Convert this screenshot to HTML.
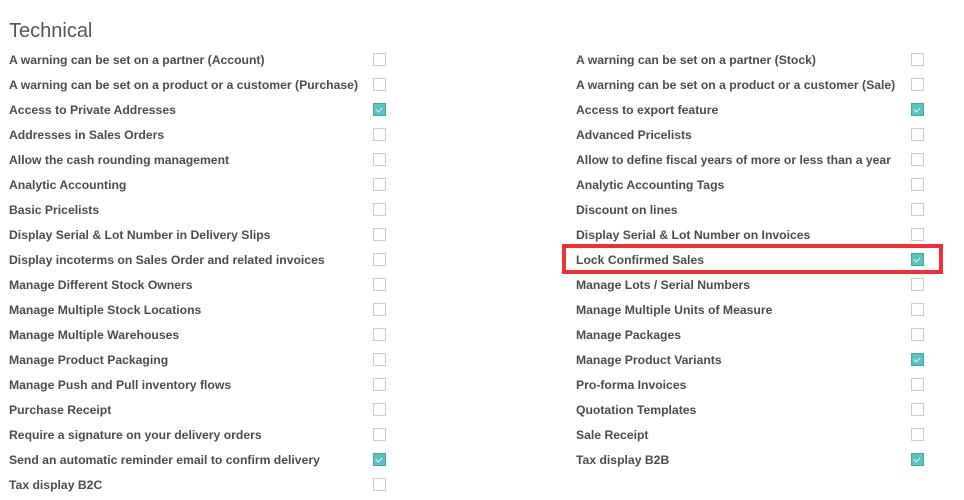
<!DOCTYPE html><html><head><style>
body{margin:0;background:#fff;width:964px;height:500px;overflow:hidden;font-family:"Liberation Sans",sans-serif;position:relative}
h1{position:absolute;left:9px;top:20px;margin:0;font-size:20px;font-weight:normal;color:#555}
.r{position:absolute;font-size:12.2px;font-weight:bold;color:#4c4c4c;line-height:16px;white-space:nowrap}
.c{position:absolute;width:11px;height:11px;border:1px solid #ccc;background:#fff}
.c.k{background:#5cc2bd;border-color:#3fa9a3}
.c.k:after{content:"";position:absolute;left:3px;top:2px;width:3px;height:5px;border:solid #e6f7f6;border-width:0 1px 1px 0;transform:rotate(45deg)}
.box{position:absolute;left:562px;top:244px;width:373px;height:22px;border:4px solid #ee3136}
</style></head><body>
<h1>Technical</h1>
<div class="box"></div>
<script>
const L=[["A warning can be set on a partner (Account)",0],["A warning can be set on a product or a customer (Purchase)",0],["Access to Private Addresses",1],["Addresses in Sales Orders",0],["Allow the cash rounding management",0],["Analytic Accounting",0],["Basic Pricelists",0],["Display Serial & Lot Number in Delivery Slips",0],["Display incoterms on Sales Order and related invoices",0],["Manage Different Stock Owners",0],["Manage Multiple Stock Locations",0],["Manage Multiple Warehouses",0],["Manage Product Packaging",0],["Manage Push and Pull inventory flows",0],["Purchase Receipt",0],["Require a signature on your delivery orders",0],["Send an automatic reminder email to confirm delivery",1],["Tax display B2C",0]];
const R=[["A warning can be set on a partner (Stock)",0],["A warning can be set on a product or a customer (Sale)",0],["Access to export feature",1],["Advanced Pricelists",0],["Allow to define fiscal years of more or less than a year",0],["Analytic Accounting Tags",0],["Discount on lines",0],["Display Serial & Lot Number on Invoices",0],["Lock Confirmed Sales",1],["Manage Lots / Serial Numbers",0],["Manage Multiple Units of Measure",0],["Manage Packages",0],["Manage Product Variants",1],["Pro-forma Invoices",0],["Quotation Templates",0],["Sale Receipt",0],["Tax display B2B",1]];
let h="";
function col(a,lx,cx){a.forEach((e,i)=>{const y=59+25*i;h+=`<div class="r" style="left:${lx}px;top:${y-7}px">${e[0].replace(/&/g,"&amp;")}</div><div class="c${e[1]?" k":""}" style="left:${cx}px;top:${y-6}px"></div>`})}
col(L,9,373);col(R,576,911);
document.body.insertAdjacentHTML("beforeend",h);
</script>
</body></html>
